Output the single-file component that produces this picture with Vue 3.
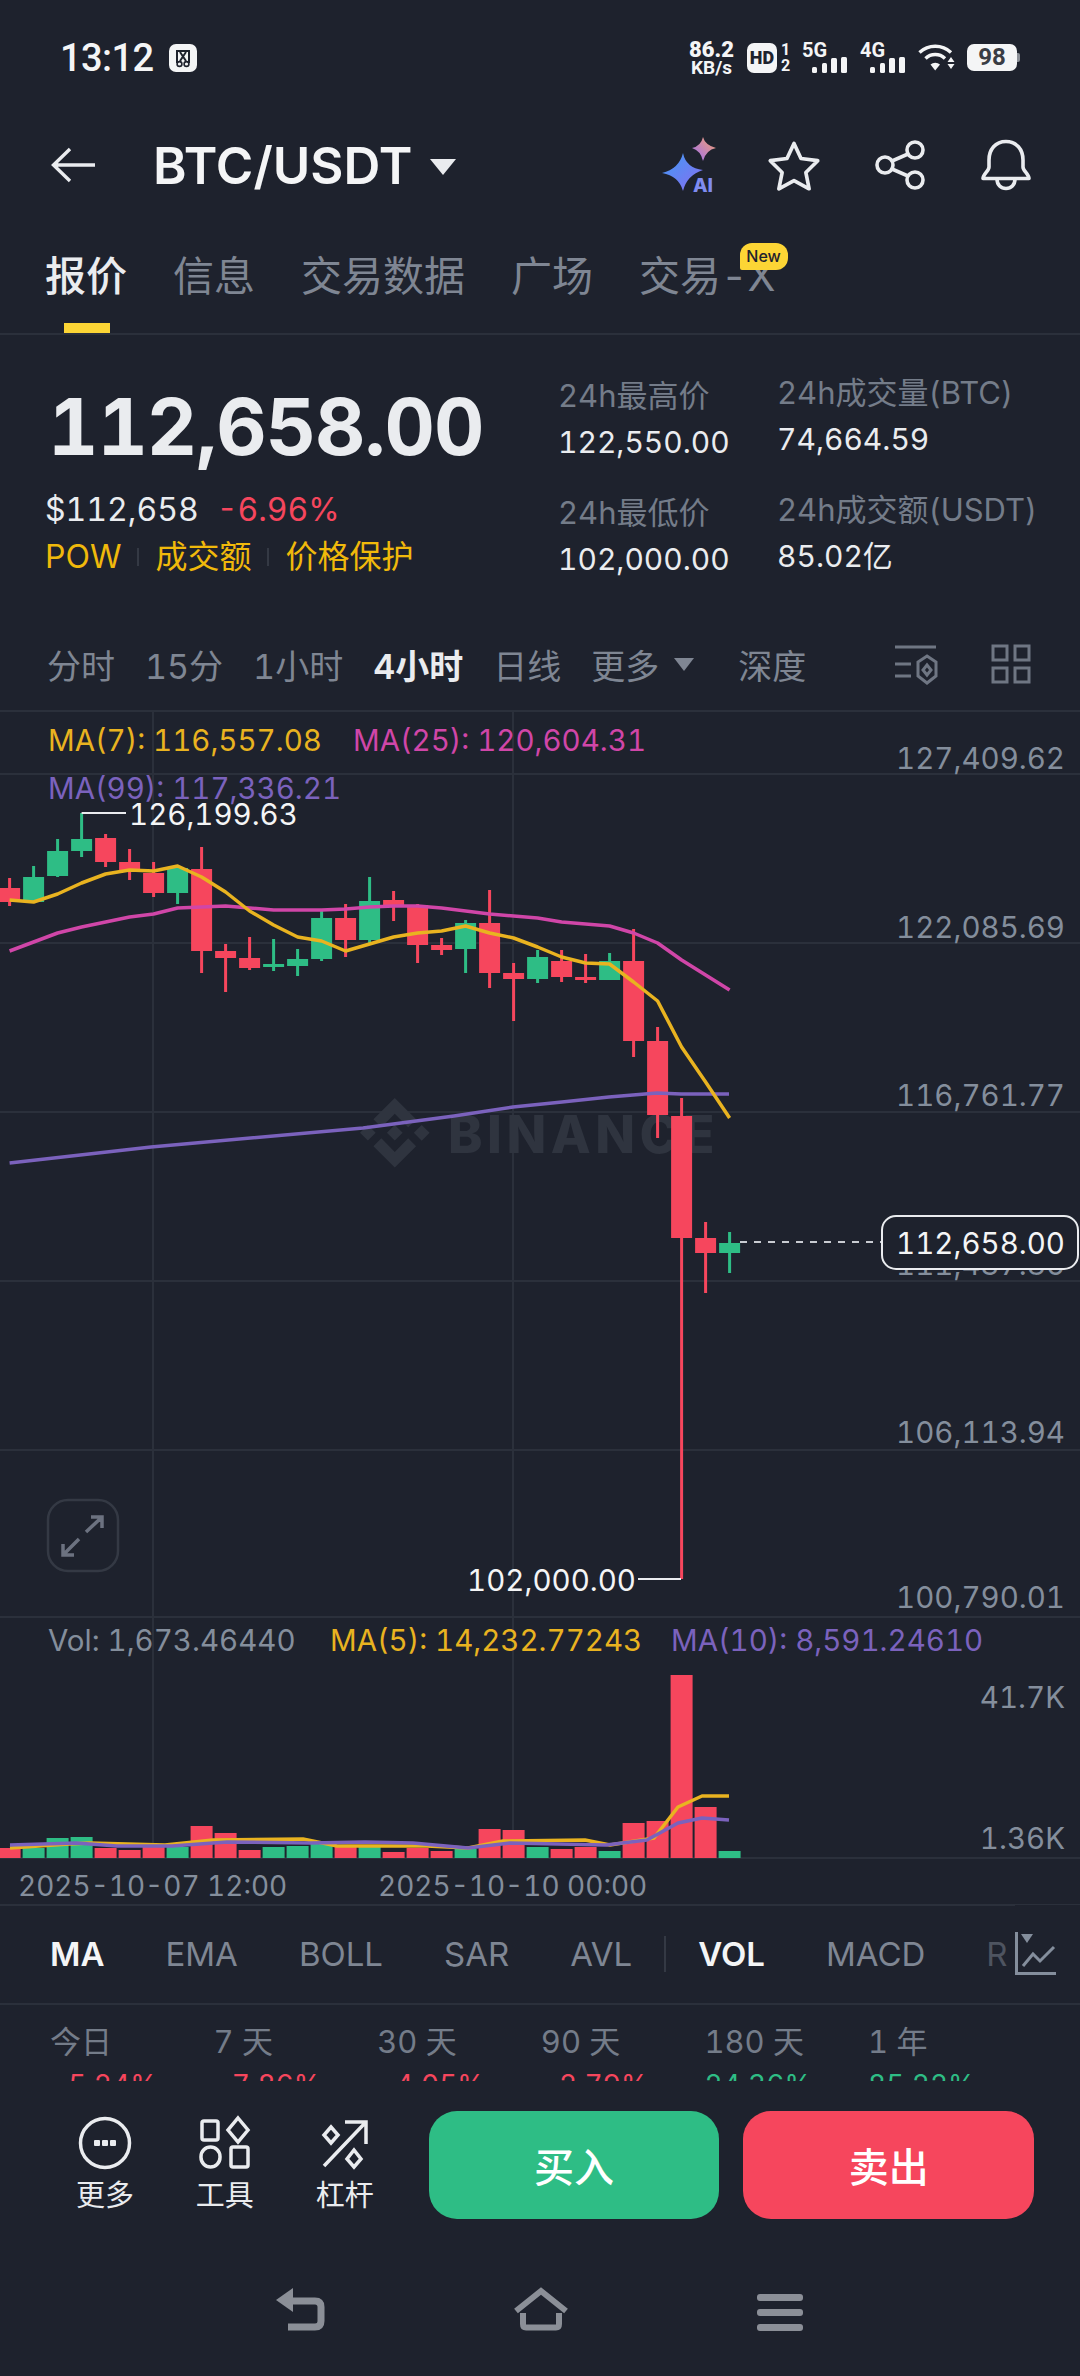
<template>
  <div class="page">
    <div class="status">
      <span class="time">13:12</span>
      <svg class="shot" width="28" height="28" viewBox="0 0 28 28">
        <rect width="28" height="28" rx="7" fill="#f4f5f6" />
        <path d="M8 19V7h12v12M11 8l6 9M17 8l-6 9" fill="none" stroke="#1e222d" stroke-width="2" />
        <circle cx="10.500" cy="20" r="2.400" fill="none" stroke="#1e222d" stroke-width="1.600" />
        <circle cx="17.500" cy="20" r="2.400" fill="none" stroke="#1e222d" stroke-width="1.600" />
      </svg>
      <div class="status-right">
        <div class="speed"><b>86.2</b><span>KB/s</span></div>
        <div class="hd">HD</div>
        <div class="sim"><span>1</span><span>2</span></div>
        <svg v-for="net in ['5G', '4G']" :key="net" class="net" width="46" height="30" viewBox="0 0 46 30">
          <text x="0" y="14" class="net-label">{{ net }}</text>
          <rect x="10" y="24" width="5" height="6" rx="1.500" fill="#f4f5f6" />
          <rect x="20" y="20" width="5" height="10" rx="1.500" fill="#f4f5f6" />
          <rect x="29" y="15" width="6" height="15" rx="1.500" fill="#f4f5f6" />
          <rect x="39" y="14" width="6" height="16" rx="1.500" fill="#f4f5f6" />
        </svg>
        <svg class="wifi" width="37" height="27" viewBox="0 0 37 27">
          <path d="M1.500 8.500A23 23 0 0 1 33 8.500M7.500 14.500A14 14 0 0 1 27 14.500" fill="none" stroke="#f4f5f6" stroke-width="3.400" />
          <path d="M12.500 20.500L17.200 26.500L22 20.500A7 7 0 0 0 12.500 20.500Z" fill="#f4f5f6" />
          <path d="M33 13l3.500 5h-7zM29.500 20h7L33 25z" fill="#f4f5f6" />
        </svg>
        <div class="battery"><span class="battery-body">98</span><span class="battery-nub"></span></div>
      </div>
    </div>

    <div class="header">
      <svg class="back" width="46" height="36" viewBox="0 0 46 36">
        <path d="M44 18H3M19 2L2.500 18L19 34" fill="none" stroke="#eaecef" stroke-width="3.400" />
      </svg>
      <span class="title">BTC/USDT</span>
      <span class="title-caret"></span>
      <div class="header-icons">
        <svg class="icon-ai" width="60" height="60" viewBox="0 0 60 60">
          <defs>
            <linearGradient id="aiBig" x1="0" y1="0" x2="1" y2="1">
              <stop offset="0" stop-color="#3f9bf5" />
              <stop offset="1" stop-color="#8a6cf0" />
            </linearGradient>
            <linearGradient id="aiSmall" x1="0" y1="1" x2="1" y2="0">
              <stop offset="0" stop-color="#9a6cf5" />
              <stop offset="1" stop-color="#f5a26c" />
            </linearGradient>
          </defs>
          <path d="M23 18Q26 33 43 35Q27 40 23 56Q19 41 2 38Q19 34 23 18Z" fill="url(#aiBig)" />
          <path d="M43 2Q45 10 56 13Q46 15 43 26Q41 16 32 13Q41 11 43 2Z" fill="url(#aiSmall)" />
          <text x="33" y="57" class="ai-label">AI</text>
        </svg>
        <svg class="icon-star" width="54" height="54" viewBox="0 0 50 50">
          <polygon points="25,5 31.500,19 47,21 36,32 39,47 25,39.500 11,47 14,32 3,21 18.500,19" fill="none" stroke="#eaecef" stroke-width="3.400" stroke-linejoin="round" />
        </svg>
        <svg class="icon-share" width="50" height="50" viewBox="0 0 50 50">
          <g fill="none" stroke="#eaecef" stroke-width="3.600">
            <circle cx="40" cy="10" r="8" />
            <circle cx="10" cy="25" r="8" />
            <circle cx="40" cy="40" r="8" />
            <path d="M33 14L17 21M17 29L33 36" />
          </g>
        </svg>
        <svg class="icon-bell" width="50" height="52" viewBox="0 0 50 52">
          <g fill="none" stroke="#eaecef" stroke-width="3.600" stroke-linejoin="round">
            <path d="M25 2.500C14.500 2.500 8 10.500 8 21V28C8 32 2 35 2 39.500H48C48 35 42 32 42 28V21C42 10.500 35.500 2.500 25 2.500Z" />
            <path d="M16 40C16 46 20 49.500 25 49.500C30 49.500 34 46 34 40" />
          </g>
        </svg>
      </div>
    </div>

    <div class="tabs">
      <div v-for="tab in tabs" :key="tab" class="tab" :class="{ active: tab === '报价' }">
        {{ tab }}
        <i v-if="tab === '报价'" class="tab-bar"></i>
        <span v-if="tab === '交易-X'" class="badge">New</span>
      </div>
    </div>

    <div class="quote">
      <div class="quote-main">
        <div class="big-price">112,658.00</div>
        <div class="sub-price"><span>$112,658</span><span class="down">-6.96%</span></div>
        <div class="tags">
          <span>POW</span><i></i><span>成交额</span><i></i><span>价格保护</span>
        </div>
      </div>
      <div class="stat-col col-a">
        <div class="stat-label">24h最高价</div>
        <div class="stat-value">122,550.00</div>
        <div class="stat-label second">24h最低价</div>
        <div class="stat-value">102,000.00</div>
      </div>
      <div class="stat-col col-b">
        <div class="stat-label">24h成交量(BTC)</div>
        <div class="stat-value">74,664.59</div>
        <div class="stat-label second">24h成交额(USDT)</div>
        <div class="stat-value">85.02亿</div>
      </div>
    </div>

    <div class="intervals">
      <span>分时</span>
      <span>15分</span>
      <span>1小时</span>
      <span class="on">4小时</span>
      <span>日线</span>
      <span>更多</span>
      <i class="more-caret"></i>
      <span class="depth">深度</span>
      <div class="interval-icons">
        <svg width="42" height="40" viewBox="0 0 42 40">
          <g fill="none" stroke="#6f7683" stroke-width="3">
            <path d="M0 3H41M0 20H16M0 32H16" />
            <path d="M32 12L41 18V32L32 39L23 32V18Z" />
            <path d="M32 21L36 26L32 31L28 26Z" />
          </g>
        </svg>
        <svg width="40" height="40" viewBox="0 0 40 40">
          <g fill="none" stroke="#6f7683" stroke-width="3">
            <rect x="2" y="2" width="14" height="14" />
            <rect x="24" y="2" width="14" height="14" />
            <rect x="2" y="24" width="14" height="14" />
            <rect x="24" y="24" width="14" height="14" />
          </g>
        </svg>
      </div>
    </div>

    <div class="chart">
      <svg class="chart-svg" width="1080" height="1195" viewBox="0 711 1080 1195">
        <path v-for="y in gridY" :key="y" :d="`M0 ${y}H1080`" stroke="#2b303b" stroke-width="2" />
        <path d="M153 711V1858M513 711V1858" stroke="#2b303b" stroke-width="2" />

        <path transform="translate(360 1098) scale(2.900)" fill="#2f343f" d="M16.624 13.9202l2.7175 2.7154-7.353 7.353-7.353-7.352 2.7175-2.7164 4.6355 4.6595 4.6356-4.6595zm4.6366-4.6366L24 12l-2.7154 2.7164L18.5682 12l2.6924-2.7164zm-9.272.001l2.7163 2.6914-2.7164 2.7174v-.001L9.2721 12l2.7164-2.7154zm-9.2722-.001L5.4088 12l-2.6914 2.6924L0 12l2.7164-2.7164zM11.9885.0115l7.353 7.329-2.7174 2.7154-4.6356-4.6356-4.6355 4.6595-2.7174-2.7154 7.353-7.353z" />
        <text x="448" y="1153" class="watermark">BINANCE</text>

        <g v-for="(c, i) in candles" :key="i" :fill="c[4] ? up : down">
          <rect :x="cx(i) - 1.500" :y="c[2]" width="3" :height="c[3] - c[2]" />
          <rect :x="cx(i) - 10.500" :y="c[0]" width="21" :height="c[1] - c[0]" />
        </g>

        <polyline :points="ma25Pts" class="ma" stroke="#d046a8" />
        <polyline :points="ma99Pts" class="ma" stroke="#7b62bd" />
        <polyline :points="ma7Pts" class="ma" stroke="#e9b320" />

        <path d="M81.600 813H126M681 1579H638" stroke="#eaecef" stroke-width="2" fill="none" />
        <text x="129" y="814" class="label white">126,199.63</text>
        <text x="636" y="1580" class="label white" text-anchor="end">102,000.00</text>

        <text x="48" y="740" class="label yellow">MA(7): 116,557.08</text>
        <text x="353" y="740" class="label magenta">MA(25): 120,604.31</text>
        <text x="48" y="788" class="label purple">MA(99): 117,336.21</text>

        <text v-for="p in priceAxis" :key="p.t" x="1065" :y="p.y" class="label axis" text-anchor="end">{{ p.t }}</text>

        <path d="M740 1242H881" stroke="#c9ccd2" stroke-width="2" stroke-dasharray="7 7" />
        <rect x="882" y="1216" width="196" height="53" rx="14" fill="#1e222d" stroke="#eaecef" stroke-width="2" />
        <text x="1065" y="1243" class="label white" text-anchor="end">112,658.00</text>

        <rect x="48" y="1500" width="70" height="71" rx="20" fill="none" stroke="#343944" stroke-width="2.500" />
        <path d="M86 1532L102 1517M91 1517H102V1528M79 1539L63 1555M63 1544V1555H74" fill="none" stroke="#6c7280" stroke-width="3.500" />

        <text x="48" y="1640" class="label axis">Vol: 1,673.46440</text>
        <text x="330" y="1640" class="label yellow">MA(5): 14,232.77243</text>
        <text x="671" y="1640" class="label purple">MA(10): 8,591.24610</text>

        <rect v-for="(v, i) in volumes" :key="i" :x="cx(i) - 11" :y="v[0]" width="22" :height="1858 - v[0]" :fill="v[1] ? up : down" />
        <polyline :points="volMa5" class="ma" stroke="#e9b320" />
        <polyline :points="volMa10" class="ma" stroke="#7b62bd" />

        <text x="1065" y="1697" class="label axis" text-anchor="end">41.7K</text>
        <text x="1065" y="1838" class="label axis" text-anchor="end">1.36K</text>
        <text x="18" y="1886" class="label axis date">2025-10-07 12:00</text>
        <text x="378" y="1886" class="label axis date">2025-10-10 00:00</text>
      </svg>
    </div>

    <div class="indicators">
      <span class="on">MA</span>
      <span>EMA</span>
      <span>BOLL</span>
      <span>SAR</span>
      <span>AVL</span>
      <i class="ind-divider"></i>
      <span class="on">VOL</span>
      <span>MACD</span>
      <span class="faded">R</span>
      <div class="ind-icon">
        <svg width="42" height="44" viewBox="0 0 42 44">
          <path d="M1.500 0V41.500H41" fill="none" stroke="#848e9c" stroke-width="3" />
          <path d="M6 2H18L12 11Z" fill="#848e9c" />
          <path d="M8 34L18 22L25 29L39 15" fill="none" stroke="#848e9c" stroke-width="3" />
        </svg>
      </div>
    </div>

    <div class="perf">
      <div v-for="p in perf" :key="p.label" class="perf-item">
        <div class="perf-label">{{ p.label }}</div>
        <div class="perf-value" :class="p.up ? 'up' : 'down'">{{ p.value }}</div>
      </div>
    </div>

    <div class="actions">
      <div class="tool">
        <svg width="54" height="54" viewBox="0 0 54 54">
          <circle cx="27" cy="27" r="24.500" fill="none" stroke="#eaecef" stroke-width="3.500" />
          <rect x="16" y="24" width="6" height="6" rx="1" fill="#eaecef" />
          <rect x="24" y="24" width="6" height="6" rx="1" fill="#eaecef" />
          <rect x="32" y="24" width="6" height="6" rx="1" fill="#eaecef" />
        </svg>
        <span>更多</span>
      </div>
      <div class="tool">
        <svg width="54" height="54" viewBox="0 0 54 54">
          <g fill="none" stroke="#eaecef" stroke-width="3.500">
            <rect x="4" y="5" width="16" height="19" rx="2" />
            <path d="M40 2L50 14L40 26L30 14Z" />
            <rect x="3" y="31" width="19" height="20" rx="9.500" />
            <rect x="33" y="31" width="17" height="20" rx="2" />
          </g>
        </svg>
        <span>工具</span>
      </div>
      <div class="tool">
        <svg width="54" height="54" viewBox="0 0 54 54">
          <g fill="none" stroke="#eaecef" stroke-width="3.500">
            <path d="M6 50L47 7M27 6H48V28" />
            <path d="M13 11L20 19L13 27L6 19Z" />
            <path d="M36 34L43 43L36 51L29 43Z" />
          </g>
        </svg>
        <span>杠杆</span>
      </div>
      <div class="btn buy">买入</div>
      <div class="btn sell">卖出</div>
    </div>

    <div class="nav">
      <svg width="50" height="44" viewBox="0 0 50 44">
        <path d="M14 13H40Q46 13 46 19V33Q46 39 40 39H13" fill="none" stroke="#8b8f97" stroke-width="7" />
        <path d="M18 0V24L1 12Z" fill="#8b8f97" />
      </svg>
      <svg width="56" height="44" viewBox="0 0 56 44">
        <path d="M3 23L28 3L53 23" fill="none" stroke="#8b8f97" stroke-width="6" />
        <path d="M10 25V36Q10 39.500 13 39.500H43Q46 39.500 46 36V25" fill="none" stroke="#8b8f97" stroke-width="6" />
      </svg>
      <svg width="46" height="44" viewBox="0 0 46 44">
        <rect y="6" width="46" height="7" rx="3" fill="#8b8f97" />
        <rect y="21" width="46" height="7" rx="3" fill="#8b8f97" />
        <rect y="36" width="46" height="7" rx="3" fill="#8b8f97" />
      </svg>
    </div>
  </div>
</template>

<script setup>
const up = '#2ebd85'
const down = '#f6465d'

const tabs = ['报价', '信息', '交易数据', '广场', '交易-X']
const gridY = [711, 774, 943, 1112, 1281, 1450, 1617, 1858, 1905]

const priceAxis = [
  { t: '127,409.62', y: 758 },
  { t: '122,085.69', y: 927 },
  { t: '116,761.77', y: 1095 },
  { t: '111,437.86', y: 1264 },
  { t: '106,113.94', y: 1432 },
  { t: '100,790.01', y: 1597 },
]

const perf = [
  { label: '今日', value: '-5.24%', up: false },
  { label: '7 天', value: '-7.86%', up: false },
  { label: '30 天', value: '-4.05%', up: false },
  { label: '90 天', value: '-2.79%', up: false },
  { label: '180 天', value: '24.36%', up: true },
  { label: '1 年', value: '85.22%', up: true },
]

const cx = (i) => 9.6 + 24 * i

// body top, body bottom, wick top, wick bottom, green?
const candles = [
  [888, 902, 878, 906, 0],
  [877, 902, 866, 902, 1],
  [851, 876, 839, 877, 1],
  [839, 851, 813, 857, 1],
  [838, 862, 834, 867, 0],
  [862, 871, 849, 880, 0],
  [873, 893, 862, 897, 0],
  [868, 893, 867, 904, 1],
  [869, 951, 847, 973, 0],
  [951, 958, 944, 992, 0],
  [958, 968, 937, 970, 0],
  [964, 967, 939, 971, 1],
  [959, 966, 949, 976, 1],
  [918, 959, 911, 961, 1],
  [918, 940, 904, 957, 0],
  [901, 940, 877, 943, 1],
  [900, 907, 891, 921, 0],
  [905, 945, 904, 963, 0],
  [945, 950, 938, 955, 0],
  [923, 949, 920, 973, 1],
  [923, 973, 890, 988, 0],
  [973, 979, 963, 1021, 0],
  [957, 979, 950, 983, 1],
  [961, 977, 950, 982, 0],
  [977, 980, 954, 983, 0],
  [961, 980, 953, 980, 1],
  [961, 1041, 929, 1057, 0],
  [1041, 1115, 1027, 1138, 0],
  [1116, 1238, 1098, 1579, 0],
  [1238, 1253, 1222, 1293, 0],
  [1243, 1253, 1232, 1273, 1],
]

const byIndex = (ys) => ys.map((y, i) => `${cx(i)},${y}`).join(' ')
const byPoint = (pts) => pts.map((p) => p.join(',')).join(' ')

const ma7Pts = byIndex([900, 902, 894, 883, 874, 870, 871, 866, 877, 892, 911, 925, 937, 941, 951, 944, 937, 933, 931, 926, 933, 938, 947, 957, 963, 964, 982, 1001, 1047, 1082, 1118])
const ma25Pts = byIndex([951, 942, 933, 927, 922, 917, 914, 908, 907, 906, 908, 910, 910, 910, 909, 907, 906, 906, 908, 911, 914, 916, 918, 922, 924, 926, 933, 943, 960, 975, 990])
const ma99Pts = byPoint([[9.6, 1163], [151, 1147], [363, 1128], [454, 1116], [513, 1107], [562, 1102], [609, 1097], [633, 1095], [657, 1093], [681, 1094], [729, 1094]])

const volumes = [
  [1848, 0], [1848, 1], [1838, 1], [1837, 1], [1848, 0], [1850, 0], [1847, 0], [1847, 1],
  [1826, 0], [1833, 0], [1850, 0], [1847, 1], [1846, 1], [1844, 1], [1847, 0], [1846, 1],
  [1852, 0], [1848, 0], [1851, 0], [1849, 1], [1829, 0], [1830, 0], [1847, 1], [1849, 0],
  [1847, 0], [1851, 1], [1823, 0], [1821, 0], [1675, 0], [1807, 0], [1851, 1],
]

const volMa5 = byPoint([[10, 1848], [69, 1844], [90, 1843], [165, 1845], [213, 1840], [303, 1839], [337, 1846], [427, 1846], [468, 1848], [503, 1841], [585, 1840], [610, 1845], [654, 1838], [678, 1807], [702, 1796], [729, 1796]])
const volMa10 = byPoint([[10, 1845], [76, 1843], [117, 1846], [172, 1846], [227, 1842], [310, 1843], [365, 1842], [413, 1843], [468, 1848], [510, 1843], [606, 1845], [647, 1840], [678, 1823], [702, 1818], [729, 1820]])
</script>

<style>
body {
  margin: 0;
  background: #1e222d;
}
</style>

<style scoped>
.page {
  width: 1080px;
  height: 2376px;
  overflow: hidden;
  background: #1e222d;
  color: #eaecef;
  font-family: Inter, "Noto Sans CJK SC", sans-serif;
  font-variant-numeric: tabular-nums;
  display: flex;
  flex-direction: column;
}
svg { overflow: visible; }

.status {
  height: 115px;
  flex-shrink: 0;
  display: flex;
  align-items: center;
  padding: 0 60px;
  box-sizing: border-box;
}
.time {
  font-family: Roboto, sans-serif;
  font-size: 38px;
  font-weight: 500;
  letter-spacing: -0.6px;
  color: #f4f5f6;
}
.shot { margin-left: 16px; }
.status-right {
  margin-left: auto;
  display: flex;
  align-items: center;
  color: #f4f5f6;
  font-family: Roboto, sans-serif;
}
.speed {
  width: 47px;
  margin-right: 12px;
  display: flex;
  flex-direction: column;
  align-items: center;
  line-height: 17px;
  font-size: 19px;
  font-weight: 700;
}
.speed b { font-size: 22px; line-height: 19px; }
.hd {
  width: 30px;
  height: 30px;
  border-radius: 7px;
  background: #f4f5f6;
  color: #1e222d;
  font-size: 18px;
  font-weight: 900;
  text-align: center;
  line-height: 30px;
}
.sim {
  width: 11px;
  margin: 0 11px 0 3px;
  display: flex;
  flex-direction: column;
  align-items: center;
  font-size: 16px;
  font-weight: 700;
  line-height: 16px;
}
.net { margin-right: 12px; }
.net-label { font: 700 20px Roboto, sans-serif; fill: #f4f5f6; }
.wifi { margin-right: 12px; }
.battery { display: flex; align-items: center; }
.battery-body {
  width: 50px;
  height: 27px;
  border-radius: 7px;
  background: #f4f5f6;
  color: #3a3d44;
  font-size: 24px;
  font-weight: 700;
  text-align: center;
  line-height: 27px;
}
.battery-nub {
  width: 3px;
  height: 9px;
  background: #8b8f97;
  border-radius: 0 2px 2px 0;
}

.header {
  height: 100px;
  flex-shrink: 0;
  display: flex;
  align-items: center;
  padding: 0 49px 0 51px;
}
.back { margin-right: 56px; }
.title {
  font-size: 51px;
  font-weight: 600;
  color: #f4f5f6;
}
.title-caret {
  margin-left: 18px;
  margin-top: 4px;
  border-left: 13px solid transparent;
  border-right: 13px solid transparent;
  border-top: 16px solid #eaecef;
}
.header-icons {
  margin-left: auto;
  display: flex;
  align-items: center;
}
.icon-star { margin-left: 47px; }
.icon-share { margin-left: 54px; }
.icon-bell { margin-left: 56px; }
.ai-label { font: 800 19px Inter, sans-serif; fill: #7f8cf0; }

.tabs {
  height: 120px;
  flex-shrink: 0;
  box-sizing: border-box;
  border-bottom: 2px solid #2b303b;
  display: flex;
  gap: 46px;
  padding: 38px 0 0 45px;
}
.tab {
  position: relative;
  height: 46px;
  line-height: 46px;
  font-size: 41px;
  color: #7f8693;
  white-space: nowrap;
}
.tab.active { color: #eaecef; font-weight: 500; }
.tab-bar {
  position: absolute;
  left: 19px;
  width: 46px;
  height: 10px;
  top: 70px;
  background: #fcd535;
}
.badge {
  position: absolute;
  right: -12px;
  top: -10px;
  width: 48px;
  height: 27px;
  border-radius: 12px 12px 12px 2px;
  background: #fcd535;
  color: #1e222d;
  font-size: 16px;
  font-weight: 500;
  line-height: 27px;
  text-align: center;
}

.quote {
  height: 282px;
  flex-shrink: 0;
  display: flex;
  padding-left: 45px;
}
.quote-main { width: 513px; padding-top: 47px; }
.big-price {
  margin-left: 3px;
  font-size: 78px;
  font-weight: 700;
  line-height: 90px;
  letter-spacing: -1px;
  white-space: nowrap;
}
.sub-price {
  margin-top: 16px;
  display: flex;
  gap: 18px;
  font-size: 32px;
  line-height: 44px;
}
.down { color: #f6465d; }
.up { color: #2ebd85; }
.tags {
  margin-top: 3px;
  display: flex;
  align-items: center;
  font-size: 32px;
  line-height: 44px;
  color: #f0b90b;
}
.tags i {
  width: 2px;
  height: 18px;
  margin: 0 16px;
  background: #343944;
}
.stat-col { width: 219px; }
.col-a { padding-top: 41px; }
.col-b { padding-top: 38px; width: 280px; }
.stat-label {
  font-size: 31px;
  line-height: 40px;
  color: #747c89;
  white-space: nowrap;
}
.stat-value {
  margin-top: 6px;
  font-size: 30px;
  line-height: 40px;
  color: #eaecef;
  white-space: nowrap;
}
.stat-label.second { margin-top: 31px; }

.intervals {
  height: 94px;
  flex-shrink: 0;
  display: flex;
  align-items: center;
  gap: 30px;
  padding: 0 49px 0 47px;
  font-size: 34px;
  color: #7f8693;
  white-space: nowrap;
}
.intervals .on { color: #eaecef; font-weight: 600; }
.more-caret {
  margin-left: -15px;
  border-left: 10px solid transparent;
  border-right: 10px solid transparent;
  border-top: 13px solid #7f8693;
}
.depth { margin-left: 14px; }
.interval-icons {
  margin-left: auto;
  display: flex;
  gap: 54px;
  align-items: center;
}

.chart {
  height: 1194px;
  flex-shrink: 0;
  position: relative;
}
.chart-svg {
  position: absolute;
  left: 0;
  top: 0;
  display: block;
}
.watermark {
  font: 800 52px Inter, sans-serif;
  fill: #2f343f;
  letter-spacing: 4.5px;
}
.ma {
  fill: none;
  stroke-width: 3.5;
  stroke-linejoin: round;
}
.label {
  font-family: Inter, sans-serif;
  font-size: 29.5px;
  dominant-baseline: central;
}
.date { font-size: 28px; }
.white { fill: #f4f5f6; }
.yellow { fill: #e9b320; }
.magenta { fill: #d046a8; }
.purple { fill: #7b62bd; }
.axis { fill: #848e9c; }

.indicators {
  height: 100px;
  flex-shrink: 0;
  position: relative;
  display: flex;
  align-items: center;
  gap: 61px;
  padding-left: 50px;
  box-sizing: border-box;
  border-bottom: 2px solid #2b303b;
  font-size: 33px;
  color: #7f8693;
  white-space: nowrap;
  overflow: hidden;
}
.indicators .on { color: #f4f5f6; font-weight: 600; }
.ind-divider {
  width: 2px;
  height: 36px;
  margin: 0 -29px;
  background: #343944;
}
.faded { opacity: 0.5; }
.ind-icon {
  position: absolute;
  right: 0;
  top: 0;
  width: 65px;
  height: 100%;
  box-sizing: border-box;
  display: flex;
  align-items: center;
  background: #1e222d;
}

.perf {
  height: 76px;
  flex-shrink: 0;
  overflow: hidden;
  display: flex;
  padding-left: 50px;
}
.perf-item { width: 163.6px; }
.perf-label {
  margin-top: 17px;
  font-size: 31px;
  line-height: 40px;
  color: #747c89;
}
.perf-value {
  margin-top: 6px;
  font-size: 28px;
  line-height: 34px;
}

.actions {
  height: 158px;
  flex-shrink: 0;
  box-sizing: border-box;
  padding: 30px 46px 0 45px;
  display: flex;
  align-items: flex-start;
}
.tool {
  width: 120px;
  padding-top: 5px;
  display: flex;
  flex-direction: column;
  align-items: center;
  font-size: 29px;
  line-height: 40px;
  color: #eaecef;
}
.tool span { margin-top: 6px; }
.btn {
  width: 291px;
  height: 108px;
  border-radius: 28px;
  display: flex;
  align-items: center;
  justify-content: center;
  font-size: 40px;
  font-weight: 500;
  color: #fff;
}
.buy { background: #2ebd85; margin-left: 24px; }
.sell { background: #f6465d; margin-left: 24px; }

.nav {
  flex: 1;
  display: flex;
  align-items: flex-start;
  padding: 49px 0 0 275px;
  gap: 188px;
}
</style>
